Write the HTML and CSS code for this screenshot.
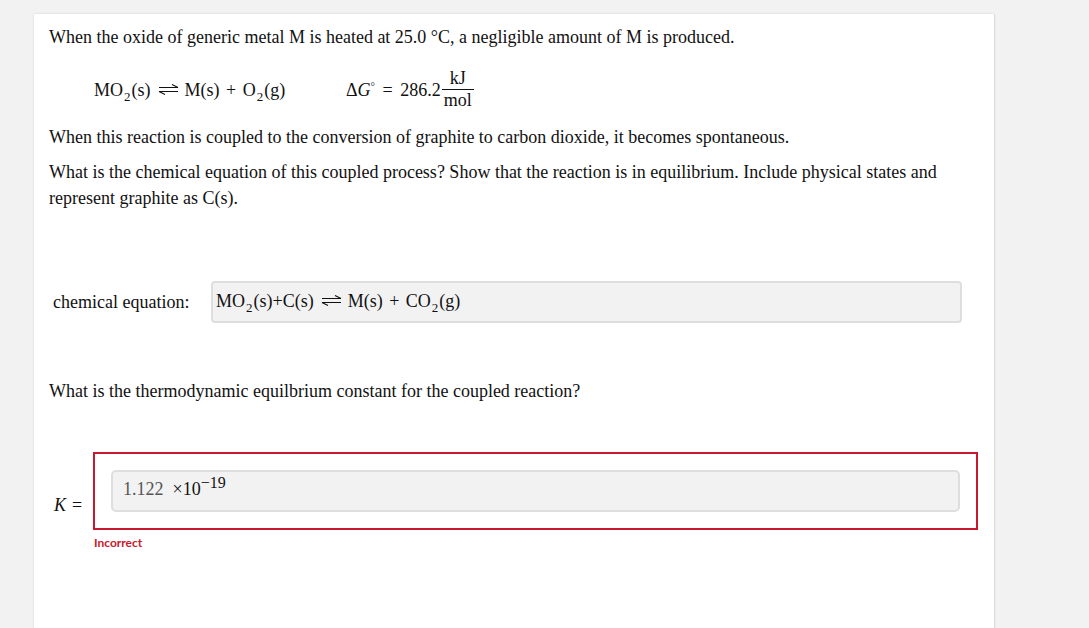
FILE: index.html
```html
<!DOCTYPE html>
<html>
<head>
<meta charset="utf-8">
<link rel="stylesheet" href="styles.css">
</head>
<body>
<div class="card">
  <p class="p1">When the oxide of generic metal M is heated at 25.0 °C, a negligible amount of M is produced.</p>
  <div class="eqrow">
    <span class="rxn">MO<sub>2</sub>(s) <svg class="eqarrow" width="21" height="11" viewBox="0 0 21 11"><path d="M1 3.5H20M20 3.5L14 0.5M20 7.5H1M1 7.5L7 10.5" fill="none" stroke="#111" stroke-width="1.1"/></svg> M(s) <span class="plus">+</span> O<sub>2</sub>(g)</span>
    <span class="dg">Δ<i>G</i><sup class="deg">°</sup> <span class="eq">=</span> 286.2<span class="frac"><span class="num">kJ</span><span class="den">mol</span></span></span>
  </div>
  <p class="p2">When this reaction is coupled to the conversion of graphite to carbon dioxide, it becomes spontaneous.</p>
  <p class="p3">What is the chemical equation of this coupled process? Show that the reaction is in equilibrium. Include physical states and represent graphite as C(s).</p>
  <div class="chemrow">
    <span class="chemlabel">chemical equation:</span>
    <div class="field chemfield">MO<sub>2</sub>(s)+C(s) <svg class="eqarrow" width="21" height="11" viewBox="0 0 21 11"><path d="M1 3.5H20M20 3.5L14 0.5M20 7.5H1M1 7.5L7 10.5" fill="none" stroke="#111" stroke-width="1.1"/></svg> M(s) <span class="plus">+</span> CO<sub>2</sub>(g)</div>
  </div>
  <p class="p4">What is the thermodynamic equilbrium constant for the coupled reaction?</p>
  <div class="krow">
    <span class="klabel"><i>K</i><span class="keq">=</span></span>
    <div class="errbox">
      <div class="field kfield"><span class="kval">1.122</span>&nbsp; ×10<sup class="exp">−19</sup></div>
    </div>
  </div>
  <div class="incorrect">Incorrect</div>
</div>
</body>
</html>
```
FILE: styles.css
```css
html, body {
  margin: 0;
  padding: 0;
  background: #f2f2f2;
  overflow: hidden;
}
body {
  font-family: "Liberation Serif", "Times New Roman", serif;
  font-size: 18px;
  color: #111;
}
.card {
  margin-left: 34px;
  margin-top: 14px;
  width: 930px;
  min-height: 700px;
  background: #fff;
  padding: 10px 15px 0 15px;
  box-shadow: 0 0 2px rgba(0,0,0,0.12), 1px 0 1px rgba(0,0,0,0.06);
}
p {
  margin: 0;
  line-height: 26px;
}
sub {
  font-size: 13px;
  vertical-align: -5px;
  line-height: 0;
  margin: 0 1px 0 1px;
}
.plus {
  margin: 0 2px;
}
.eqrow {
  margin-top: 20px;
  padding-left: 45px;
  line-height: 26px;
  display: flex;
  align-items: baseline;
}
.rxn {
  width: 252px;
  flex: none;
}
.eqarrow {
  vertical-align: 1px;
  margin: 0 1px 0 3px;
}
.dg i {
  font-style: italic;
}
.deg {
  font-size: 11px;
  vertical-align: 6px;
  line-height: 0;
}
.eq {
  margin: 0 3px;
}
.frac {
  display: inline-block;
  vertical-align: -10px;
  text-align: center;
  margin-left: 1px;
  line-height: 17px;
}
.num {
  display: block;
  padding: 0 2px 2px 2px;
  border-bottom: 1px solid #111;
}
.den {
  display: block;
  padding: 2px 2px 0 2px;
}
.p2 {
  margin-top: 15px;
}
.p3 {
  margin-top: 9px;
}
.chemrow {
  margin-top: 70px;
  display: flex;
  align-items: center;
}
.chemlabel {
  padding-left: 4px;
  width: 158px;
  flex: none;
}
.field {
  background: #f2f2f2;
  border: 2px solid #dedede;
  border-radius: 4px;
  box-sizing: border-box;
}
.chemfield {
  width: 751px;
  height: 42px;
  padding-left: 3px;
  line-height: 34px;
  padding-top: 1px;
}
.p4 {
  margin-top: 55px;
}
.krow {
  margin-top: 48px;
  display: flex;
  align-items: flex-end;
}
.klabel {
  width: 39px;
  padding-left: 5px;
  flex: none;
  line-height: 26px;
  padding-bottom: 12px;
}
.klabel i {
  font-style: italic;
}
.keq {
  margin-left: 6px;
}
.errbox {
  flex: 1;
  border: 2px solid #c8182d;
  padding: 16px;
  margin-right: 1px;
}
.kfield {
  height: 42px;
  padding-left: 10px;
  border-radius: 5px;
  line-height: 34px;
}
.kval {
  color: #555;
}
.exp {
  font-size: 16px;
  vertical-align: 7px;
  line-height: 0;
}
.incorrect {
  margin-left: 45px;
  margin-top: 5px;
  font-family: Lato, "Open Sans", sans-serif;
  font-weight: bold;
  font-size: 12px;
  line-height: 16px;
  color: #c8182d;
}
```
